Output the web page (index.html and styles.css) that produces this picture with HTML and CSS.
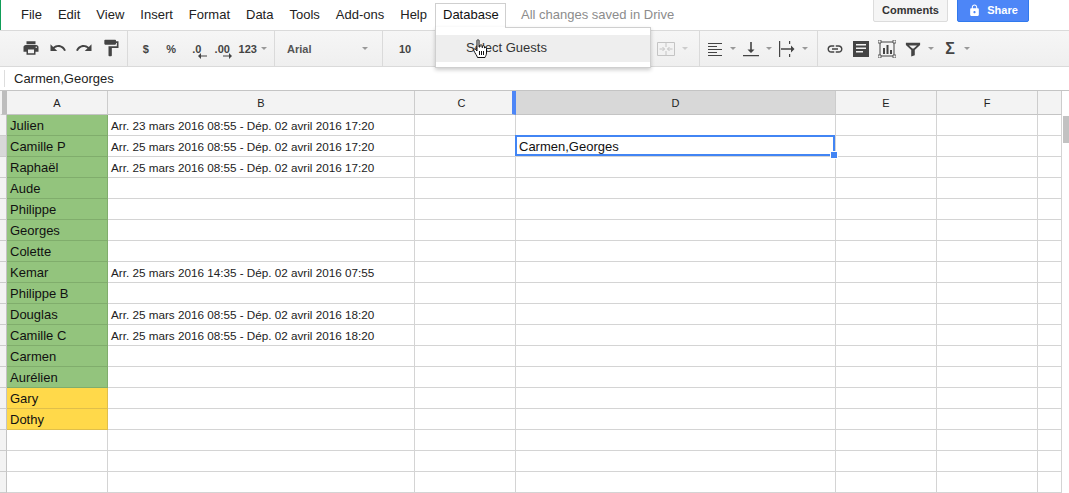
FILE: index.html
```html
<!DOCTYPE html>
<html lang="en">

<head>
  <meta charset="UTF-8" />
  <meta name="viewport" content="width=device-width, initial-scale=1" />
  <title>Guests - Sheet</title>
  <link rel="stylesheet" href="styles.css">
</head>

<body>
  <header class="menubar">
    <nav class="menu">
      <span class="menu-item">File</span>
      <span class="menu-item">Edit</span>
      <span class="menu-item">View</span>
      <span class="menu-item">Insert</span>
      <span class="menu-item">Format</span>
      <span class="menu-item">Data</span>
      <span class="menu-item">Tools</span>
      <span class="menu-item">Add-ons</span>
      <span class="menu-item">Help</span>
      <div class="menu-tab">
        <span class="tab-label">Database</span>
        <div class="dropdown">
          <div class="dropdown-item">Select Guests</div>
        </div>
        <svg class="hand" viewBox="0 0 14 20" width="14" height="20">
          <path d="M4 1.5c0-1 2-1 2 0V8l1 0V6.5c0-1 2-1 2 0V8.500h.5V7.500c0-1 2-1 2 0V9h.3c0-.8 1.700-.8 1.700 .2V14c0 2-1 3-1.500 4.500H4.500C4 16.500 2 14.500 .8 11.500c-.5-1.500 1-2.200 1.800-1L4 12z" fill="#fff" stroke="#111" stroke-width="1" />
          <path d="M6.500 12v4M8.500 12v4M10.500 12v4" stroke="#111" stroke-width="1" fill="none" />
        </svg>
      </div>
      <span class="saved">All changes saved in Drive</span>
    </nav>
    <div class="actions">
      <button class="btn btn-comments">Comments</button>
      <button class="btn btn-share">
        <svg viewBox="0 0 24 24" width="13" height="13"><path fill="#fff" d="M18 8h-1V6c0-2.760-2.240-5-5-5S7 3.240 7 6v2H6c-1.100 0-2 .9-2 2v10c0 1.100.9 2 2 2h12c1.100 0 2-.9 2-2V10c0-1.100-.9-2-2-2zm-6 9c-1.100 0-2-.9-2-2s.9-2 2-2 2 .9 2 2-.9 2-2 2zm3.100-9H8.900V6c0-1.710 1.390-3.100 3.100-3.100 1.710 0 3.100 1.390 3.100 3.100v2z" /></svg>
        Share
      </button>
    </div>
  </header>

  <div class="toolbar">
    <div class="group group-history">
      <span class="tool"><svg viewBox="0 0 24 24" width="18" height="18"><path d="M19 8H5c-1.660 0-3 1.340-3 3v6h4v4h12v-4h4v-6c0-1.660-1.340-3-3-3zm-3 11H8v-5h8v5zm3-7c-.55 0-1-.45-1-1s.45-1 1-1 1 .45 1 1-.45 1-1 1zm-1-9H6v4h12V3z" /></svg></span>
      <span class="tool"><svg viewBox="0 0 24 24" width="18" height="18"><path d="M12.500 8c-2.650 0-5.050.99-6.900 2.600L2 7v9h9l-3.620-3.620c1.390-1.160 3.160-1.880 5.120-1.880 3.540 0 6.550 2.310 7.600 5.500l2.370-.78C21.080 11.030 17.150 8 12.500 8z" /></svg></span>
      <span class="tool"><svg viewBox="0 0 24 24" width="18" height="18"><path d="M18.400 10.600C16.550 8.990 14.150 8 11.500 8c-4.650 0-8.580 3.030-9.960 7.220L3.900 16c1.050-3.190 4.050-5.500 7.600-5.500 1.950 0 3.730.72 5.120 1.880L13 16h9V7l-3.600 3.600z" /></svg></span>
      <span class="tool"><svg viewBox="0 0 24 24" width="20" height="20"><path d="M18 4V3c0-.55-.45-1-1-1H5c-.55 0-1 .45-1 1v4c0 .55.45 1 1 1h12c.55 0 1-.45 1-1V6h1v4H9v11c0 .55.45 1 1 1h2c.55 0 1-.45 1-1v-9h8V4h-3z" /></svg></span>
    </div>

    <div class="group group-number">
      <span class="slot">$</span>
      <span class="slot">%</span>
      <span class="slot slot-arrow">.0
        <svg class="mini-arrow" viewBox="0 0 9 6" width="9" height="6"><path d="M9 2.500H3V0L0 3l3 3V3.500h6z" /></svg>
      </span>
      <span class="slot slot-arrow">.00
        <svg class="mini-arrow" viewBox="0 0 9 6" width="9" height="6"><path d="M0 2.500h6V0l3 3-3 3V3.500H0z" /></svg>
      </span>
      <span class="slot">123</span>
      <i class="caret"></i>
    </div>

    <div class="group group-font">
      <span class="font-name">Arial</span>
      <i class="caret"></i>
    </div>

    <div class="group group-style">
      <span class="font-size">10</span>
      <span class="merge">
        <svg viewBox="0 0 18 14" width="18" height="14"><path d="M.5 .5h17v13H.5zM9 0v5M9 9v5" fill="none" stroke="#c4c4c4" /><path d="M2.500 7h5M5.500 5l2 2-2 2M15.500 7h-5M12.500 5l-2 2 2 2" fill="none" stroke="#c4c4c4" /></svg>
        <i class="caret caret-light"></i>
      </span>
    </div>

    <div class="group group-align">
      <span class="tool-sm"><svg viewBox="0 0 18 18" width="18" height="18"><path d="M2 3h14v1H2zM2 6h9v1H2zM2 9h14v1H2zM2 12h9v1H2zM2 15h14v1H2z" /></svg></span>
      <i class="caret"></i>
      <span class="tool-sm"><svg viewBox="0 0 18 18" width="18" height="18"><path d="M1 15h16v1.200H1zM8.200 2h1.600v7.500H12.500L9 13 5.500 9.500h2.700z" /></svg></span>
      <i class="caret"></i>
      <span class="tool-sm"><svg viewBox="0 0 18 18" width="18" height="18"><path d="M1 1h1.200v16H1zM3 8.300h10V5.500L16.500 9 13 12.500V9.700H3zM11 1h1.200v3H11zM11 14h1.200v3H11z" /></svg></span>
      <i class="caret"></i>
    </div>

    <div class="group group-insert">
      <span class="tool-sm"><svg viewBox="0 0 24 24" width="22" height="22"><path d="M3.900 12c0-1.710 1.390-3.100 3.100-3.100h4V7H7c-2.760 0-5 2.240-5 5s2.240 5 5 5h4v-1.900H7c-1.710 0-3.100-1.390-3.100-3.100zM8 13h8v-2H8v2zm9-6h-4v1.900h4c1.710 0 3.100 1.390 3.100 3.100s-1.390 3.100-3.100 3.100h-4V17h4c2.760 0 5-2.240 5-5s-2.240-5-5-5z" /></svg></span>
      <span class="tool-sm"><svg viewBox="0 0 18 18" width="18" height="18"><path fill-rule="evenodd" d="M1 1h16v16H1zM4 4v1.500h10V4zM4 7.500V9h10V7.500zM4 11v1.500h7V11z" /></svg></span>
      <span class="tool-sm"><svg viewBox="0 0 18 18" width="18" height="18"><path d="M2 2h14v14H2z" fill="none" stroke="#444" /><path d="M0 0h3v3H0zM15 0h3v3h-3zM0 15h3v3H0zM15 15h3v3h-3z" fill="#f3f3f3" stroke="#444" stroke-width=".8" /><path d="M5 8h2v6H5zM8.500 5h2v9h-2zM12 10h2v4h-2z" /></svg></span>
      <span class="tool-sm"><svg viewBox="0 0 18 18" width="16" height="16"><path fill-rule="evenodd" d="M1 2h16v2.500L11 10v6l-4 1.500V10L1 4.500zM4.500 5l3.800 3.500h1.400L13.500 5z" /></svg></span>
      <i class="caret caret-pull"></i>
      <span class="sigma">Σ</span>
      <i class="caret caret-pull"></i>
    </div>
  </div>

  <div class="formula-bar">
    <span class="formula-text">Carmen,Georges</span>
  </div>

  <div class="sheet">
    <div class="grid">
      <div class="row row-head">
        <div class="corner"></div>
        <div class="col-head">A</div>
        <div class="col-head">B</div>
        <div class="col-head col-frozen">C</div>
        <div class="col-head col-active">D</div>
        <div class="col-head">E</div>
        <div class="col-head">F</div>
        <div class="col-head"></div>
      </div>

      <div class="row"><div class="num"></div><div class="cell green">Julien</div><div class="cell small">Arr. 23 mars 2016 08:55 - Dép. 02 avril 2016 17:20</div><div class="cell"></div><div class="cell"></div><div class="cell"></div><div class="cell"></div><div class="cell"></div></div>
      <div class="row"><div class="num num-active"></div><div class="cell green">Camille P</div><div class="cell small">Arr. 25 mars 2016 08:55 - Dép. 02 avril 2016 17:20</div><div class="cell"></div><div class="cell cell-active">Carmen,Georges<div class="selection"><span class="handle"></span></div></div><div class="cell"></div><div class="cell"></div><div class="cell"></div></div>
      <div class="row"><div class="num"></div><div class="cell green">Raphaël</div><div class="cell small">Arr. 25 mars 2016 08:55 - Dép. 02 avril 2016 17:20</div><div class="cell"></div><div class="cell"></div><div class="cell"></div><div class="cell"></div><div class="cell"></div></div>
      <div class="row"><div class="num"></div><div class="cell green">Aude</div><div class="cell"></div><div class="cell"></div><div class="cell"></div><div class="cell"></div><div class="cell"></div><div class="cell"></div></div>
      <div class="row"><div class="num"></div><div class="cell green">Philippe</div><div class="cell"></div><div class="cell"></div><div class="cell"></div><div class="cell"></div><div class="cell"></div><div class="cell"></div></div>
      <div class="row"><div class="num"></div><div class="cell green">Georges</div><div class="cell"></div><div class="cell"></div><div class="cell"></div><div class="cell"></div><div class="cell"></div><div class="cell"></div></div>
      <div class="row"><div class="num"></div><div class="cell green">Colette</div><div class="cell"></div><div class="cell"></div><div class="cell"></div><div class="cell"></div><div class="cell"></div><div class="cell"></div></div>
      <div class="row"><div class="num"></div><div class="cell green">Kemar</div><div class="cell small">Arr. 25 mars 2016 14:35 - Dép. 02 avril 2016 07:55</div><div class="cell"></div><div class="cell"></div><div class="cell"></div><div class="cell"></div><div class="cell"></div></div>
      <div class="row"><div class="num"></div><div class="cell green">Philippe B</div><div class="cell"></div><div class="cell"></div><div class="cell"></div><div class="cell"></div><div class="cell"></div><div class="cell"></div></div>
      <div class="row"><div class="num"></div><div class="cell green">Douglas</div><div class="cell small">Arr. 25 mars 2016 08:55 - Dép. 02 avril 2016 18:20</div><div class="cell"></div><div class="cell"></div><div class="cell"></div><div class="cell"></div><div class="cell"></div></div>
      <div class="row"><div class="num"></div><div class="cell green">Camille C</div><div class="cell small">Arr. 25 mars 2016 08:55 - Dép. 02 avril 2016 18:20</div><div class="cell"></div><div class="cell"></div><div class="cell"></div><div class="cell"></div><div class="cell"></div></div>
      <div class="row"><div class="num"></div><div class="cell green">Carmen</div><div class="cell"></div><div class="cell"></div><div class="cell"></div><div class="cell"></div><div class="cell"></div><div class="cell"></div></div>
      <div class="row"><div class="num"></div><div class="cell green">Aurélien</div><div class="cell"></div><div class="cell"></div><div class="cell"></div><div class="cell"></div><div class="cell"></div><div class="cell"></div></div>
      <div class="row"><div class="num"></div><div class="cell yellow">Gary</div><div class="cell"></div><div class="cell"></div><div class="cell"></div><div class="cell"></div><div class="cell"></div><div class="cell"></div></div>
      <div class="row"><div class="num"></div><div class="cell yellow">Dothy</div><div class="cell"></div><div class="cell"></div><div class="cell"></div><div class="cell"></div><div class="cell"></div><div class="cell"></div></div>
      <div class="row"><div class="num"></div><div class="cell"></div><div class="cell"></div><div class="cell"></div><div class="cell"></div><div class="cell"></div><div class="cell"></div><div class="cell"></div></div>
      <div class="row"><div class="num"></div><div class="cell"></div><div class="cell"></div><div class="cell"></div><div class="cell"></div><div class="cell"></div><div class="cell"></div><div class="cell"></div></div>
      <div class="row"><div class="num"></div><div class="cell"></div><div class="cell"></div><div class="cell"></div><div class="cell"></div><div class="cell"></div><div class="cell"></div><div class="cell"></div></div>
    </div>

    <div class="scrollbar">
      <div class="thumb"></div>
    </div>
  </div>
</body>

</html>
```

FILE: styles.css
```css
* {
  box-sizing: border-box;
}

body {
  margin: 0;
  width: 1069px;
  height: 493px;
  overflow: hidden;
  background: #fff;
  font-family: "Liberation Sans", Arial, sans-serif;
  font-size: 13px;
  color: #222;
}

/* menu bar */
.menubar {
  display: flex;
  justify-content: space-between;
  height: 30px;
  padding-left: 13px;
  padding-right: 40px;
  border-left: 1px solid #0f9d58;
}

.menu {
  display: flex;
  align-items: center;
  margin-left: -1px;
}

.menu-item {
  padding: 0 8px;
  margin-top: -1px;
}

.menu-tab {
  position: relative;
  align-self: flex-start;
  width: 71px;
  height: 28px;
  margin-top: 3px;
  padding: 3px 0 0 7px;
  border: 1px solid #cfcfcf;
  border-bottom: none;
  background: #fff;
}

.tab-label {
  position: relative;
  z-index: 3;
  color: #111;
}

.dropdown {
  position: absolute;
  z-index: 2;
  top: 23px;
  left: -1px;
  width: 216px;
  height: 41px;
  padding-top: 7px;
  background: #fff;
  border: 1px solid #cfcfcf;
  box-shadow: 0 2px 4px rgba(0, 0, 0, .2);
}

.dropdown-item {
  height: 27px;
  line-height: 26px;
  padding-left: 30px;
  background: #eee;
  color: #333;
}

.menu-tab::after {
  content: "";
  position: absolute;
  z-index: 3;
  left: 0;
  right: 0;
  top: 23px;
  height: 2px;
  background: #fff;
}

.hand {
  position: absolute;
  z-index: 4;
  top: 35px;
  left: 37px;
}

.saved {
  margin-left: 15px;
  margin-top: -1px;
  color: #8c8c8c;
}

.actions {
  display: flex;
  gap: 9px;
  align-items: flex-start;
}

.btn {
  display: flex;
  align-items: center;
  justify-content: center;
  height: 24px;
  margin-top: -2px;
  padding: 0;
  border-radius: 2px;
  font-family: inherit;
  font-size: 11px;
  font-weight: bold;
}

.btn-comments {
  width: 75px;
  border: 1px solid #dcdcdc;
  background: #f5f5f5;
  color: #333;
}

.btn-share {
  gap: 6px;
  width: 72px;
  border: 1px solid #3079ed;
  background: #4d86f7;
  color: #fff;
}

/* toolbar */
.toolbar {
  display: flex;
  height: 37px;
  border-top: 1px solid #dadada;
  border-bottom: 1px solid #dadada;
  background: linear-gradient(#f6f6f6, #efefef);
}

.group {
  display: flex;
  align-items: center;
  border-right: 1px solid #dadada;
  color: #444;
}

.group svg {
  fill: #444;
  display: block;
}

.group-history {
  width: 128px;
  padding-left: 18px;
  padding-bottom: 1px;
}

.tool {
  display: flex;
  justify-content: center;
  width: 26.500px;
}

.group-number {
  width: 147px;
  padding-left: 5px;
  font-size: 11px;
  font-weight: bold;
}

.slot {
  position: relative;
  width: 25.500px;
  text-align: center;
}

.mini-arrow {
  position: absolute;
  top: 10px;
  right: 3px;
}

.caret {
  display: block;
  width: 0;
  height: 0;
  flex: none;
  border-left: 3px solid transparent;
  border-right: 3px solid transparent;
  border-top: 3px solid #999;
}

.caret-light {
  border-top-color: #ccc;
}

.group-font {
  justify-content: space-between;
  width: 108px;
  padding: 0 14px 0 12px;
  font-size: 11px;
  font-weight: bold;
}

.font-name {
  color: #555;
}

.group-style {
  width: 317px;
  padding-left: 16px;
}

.font-size {
  font-size: 11px;
  font-weight: bold;
}

.merge {
  display: flex;
  align-items: center;
  gap: 7px;
  margin-left: auto;
  margin-right: 11px;
}

.group-align {
  gap: 6px;
  width: 118px;
  padding-left: 6px;
}

.tool-sm {
  display: flex;
  justify-content: center;
  width: 18px;
}

.group-insert {
  gap: 8px;
  padding-left: 8px;
  border-right: none;
}

.caret-pull {
  margin-left: -2px;
}

.sigma {
  width: 16px;
  text-align: center;
  font-size: 16px;
  font-weight: bold;
}

/* formula bar */
.formula-bar {
  display: flex;
  align-items: center;
  height: 24px;
  padding-left: 14px;
  border-bottom: 1px solid #c4c4c4;
}

.formula-text {
  position: relative;
  color: #222;
}

.formula-text::before {
  content: "";
  position: absolute;
  left: -10px;
  top: -1px;
  bottom: -1px;
  border-left: 1px solid #ddd;
}

/* sheet */
.sheet {
  display: flex;
  height: 402px;
}

.grid {
  width: 1062px;
}

.row {
  display: grid;
  grid-template-columns: 7px 101px 307px 101px 320px 101px 101px 24px;
  grid-template-rows: 21px;
  height: 21px;
}

.row-head {
  grid-template-rows: 24px;
  height: 24px;
}

.corner {
  border-left: 2px solid #f3f3f3;
  background: #bdbdbd;
  border-bottom: 1px solid #c4c4c4;
}

.col-head {
  display: flex;
  align-items: center;
  justify-content: center;
  background: #f3f3f3;
  border-right: 1px solid #ccc;
  border-bottom: 1px solid #c4c4c4;
  font-size: 11px;
  color: #222;
}

.col-frozen {
  position: relative;
  padding-right: 4px;
  border-right: 4px solid #4d86f7;
}

.col-active {
  background: #d8d8d8;
}

.num {
  background: #f3f3f3;
  border-right: 1px solid #c4c4c4;
  border-bottom: 1px solid #ccc;
}

.num-active {
  background: #d8d8d8;
}

.cell {
  padding: 2px 0 0 3px;
  line-height: 18px;
  border-right: 1px solid #d4d4d4;
  border-bottom: 1px solid #d4d4d4;
  white-space: nowrap;
  color: #111;
}

.small {
  font-size: 11.700px;
  color: #222;
}

.green {
  background: #93c47d;
  border-color: #80ad6c;
}

.yellow {
  background: #ffd94a;
  border-color: #e0bf4a;
}

.cell-active {
  position: relative;
}

.selection {
  position: absolute;
  top: -1px;
  left: -1px;
  right: 0;
  bottom: 0;
  border: 2px solid #4285f4;
}

.handle {
  position: absolute;
  right: -5px;
  bottom: -5px;
  width: 8px;
  height: 8px;
  border: 1px solid #fff;
  background: #4285f4;
}

.scrollbar {
  flex: 1;
  padding-top: 25px;
  padding-left: 1px;
}

.thumb {
  height: 27px;
  background: #c2c2c2;
}
```
